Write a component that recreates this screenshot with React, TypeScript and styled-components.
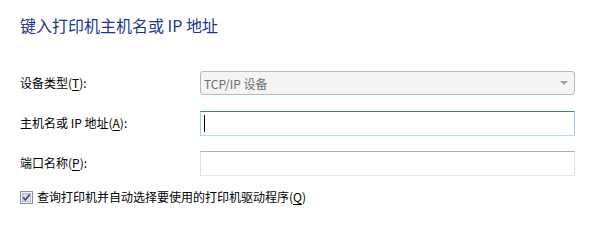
import React from 'react'
import styled, { createGlobalStyle } from 'styled-components'

const GlobalStyle = createGlobalStyle`
  html, body {
    margin: 0;
    padding: 0;
    background: #fff;
  }
  body {
    font-family: "Noto Sans CJK SC", "Noto Sans", sans-serif;
    color: #000;
  }
`

const Page = styled.div`
  width: 590px;
  height: 223px;
  box-sizing: border-box;
  padding: 13px 0 0 20px;
  background: #fff;
  overflow: hidden;
`

const Title = styled.div`
  font-size: 16px;
  line-height: 24px;
  color: #1e3a8a;
  color: #1d3687;
`

const Form = styled.div`
  display: grid;
  grid-template-columns: 180px 375px;
  grid-auto-rows: 24px;
  row-gap: 16px;
  margin-top: 34px;
  align-items: center;
`

const Label = styled.div`
  font-size: 12px;
  line-height: 16px;
`

const Key = styled.span`
  text-decoration: underline;
  text-underline-offset: 2px;
`

const Combo = styled.div`
  height: 24px;
  box-sizing: border-box;
  border: 1px solid #b6b9bc;
  border-radius: 3px;
  background: #f4f4f4;
  display: flex;
  align-items: center;
  justify-content: space-between;
  padding: 0 6px 0 3px;
  font-size: 12px;
  color: #6d6d6d;
`

const Arrow = styled.span`
  width: 0;
  height: 0;
  border-left: 4px solid transparent;
  border-right: 4px solid transparent;
  border-top: 4px solid #a0a0a0;
`

const TextBox = styled.div<{ $focused?: boolean }>`
  height: 25px;
  box-sizing: border-box;
  border: 1px solid ${p => (p.$focused ? '#a4c9e3' : '#dbdfe6')};
  border-top-color: ${p => (p.$focused ? '#3d7bad' : '#abadb3')};
  border-bottom-color: ${p => (p.$focused ? '#b7d9ed' : '#e3e9ef')};
  background: #fff;
  display: flex;
  align-items: center;
  padding-left: 3px;
`

const Caret = styled.span`
  width: 1px;
  height: 17px;
  background: #000;
`

const CheckRow = styled.div`
  display: flex;
  align-items: center;
  gap: 4px;
  margin-top: 14px;
  font-size: 12px;
  line-height: 16px;
`

const CheckBox = () => (
  <svg width="13" height="13" viewBox="0 0 13 13">
    <defs>
      <linearGradient id="cbfill" x1="0" y1="0" x2="1" y2="1">
        <stop offset="0" stopColor="#cfd3d8" />
        <stop offset="1" stopColor="#f6f7f9" />
      </linearGradient>
    </defs>
    <rect x="0.5" y="0.5" width="12" height="12" fill="#f4f4f4" stroke="#8e8f8f" />
    <rect x="2.5" y="2.5" width="8" height="8" fill="url(#cbfill)" stroke="#b9bec4" />
    <path d="M3.2 6.4 L5.4 9 L9.8 3.4" fill="none" stroke="#3c4f8f" strokeWidth="1.7" />
  </svg>
)

const App: React.FC = () => (
  <>
    <GlobalStyle />
    <Page>
      <Title>键入打印机主机名或 IP 地址</Title>
      <Form>
        <Label>设备类型(<Key>T</Key>):</Label>
        <Combo>
          <span>TCP/IP 设备</span>
          <Arrow />
        </Combo>
        <Label>主机名或 IP 地址(<Key>A</Key>):</Label>
        <TextBox $focused>
          <Caret />
        </TextBox>
        <Label>端口名称(<Key>P</Key>):</Label>
        <TextBox />
      </Form>
      <CheckRow>
        <CheckBox />
        <span>查询打印机并自动选择要使用的打印机驱动程序(<Key>Q</Key>)</span>
      </CheckRow>
    </Page>
  </>
)

export default App
